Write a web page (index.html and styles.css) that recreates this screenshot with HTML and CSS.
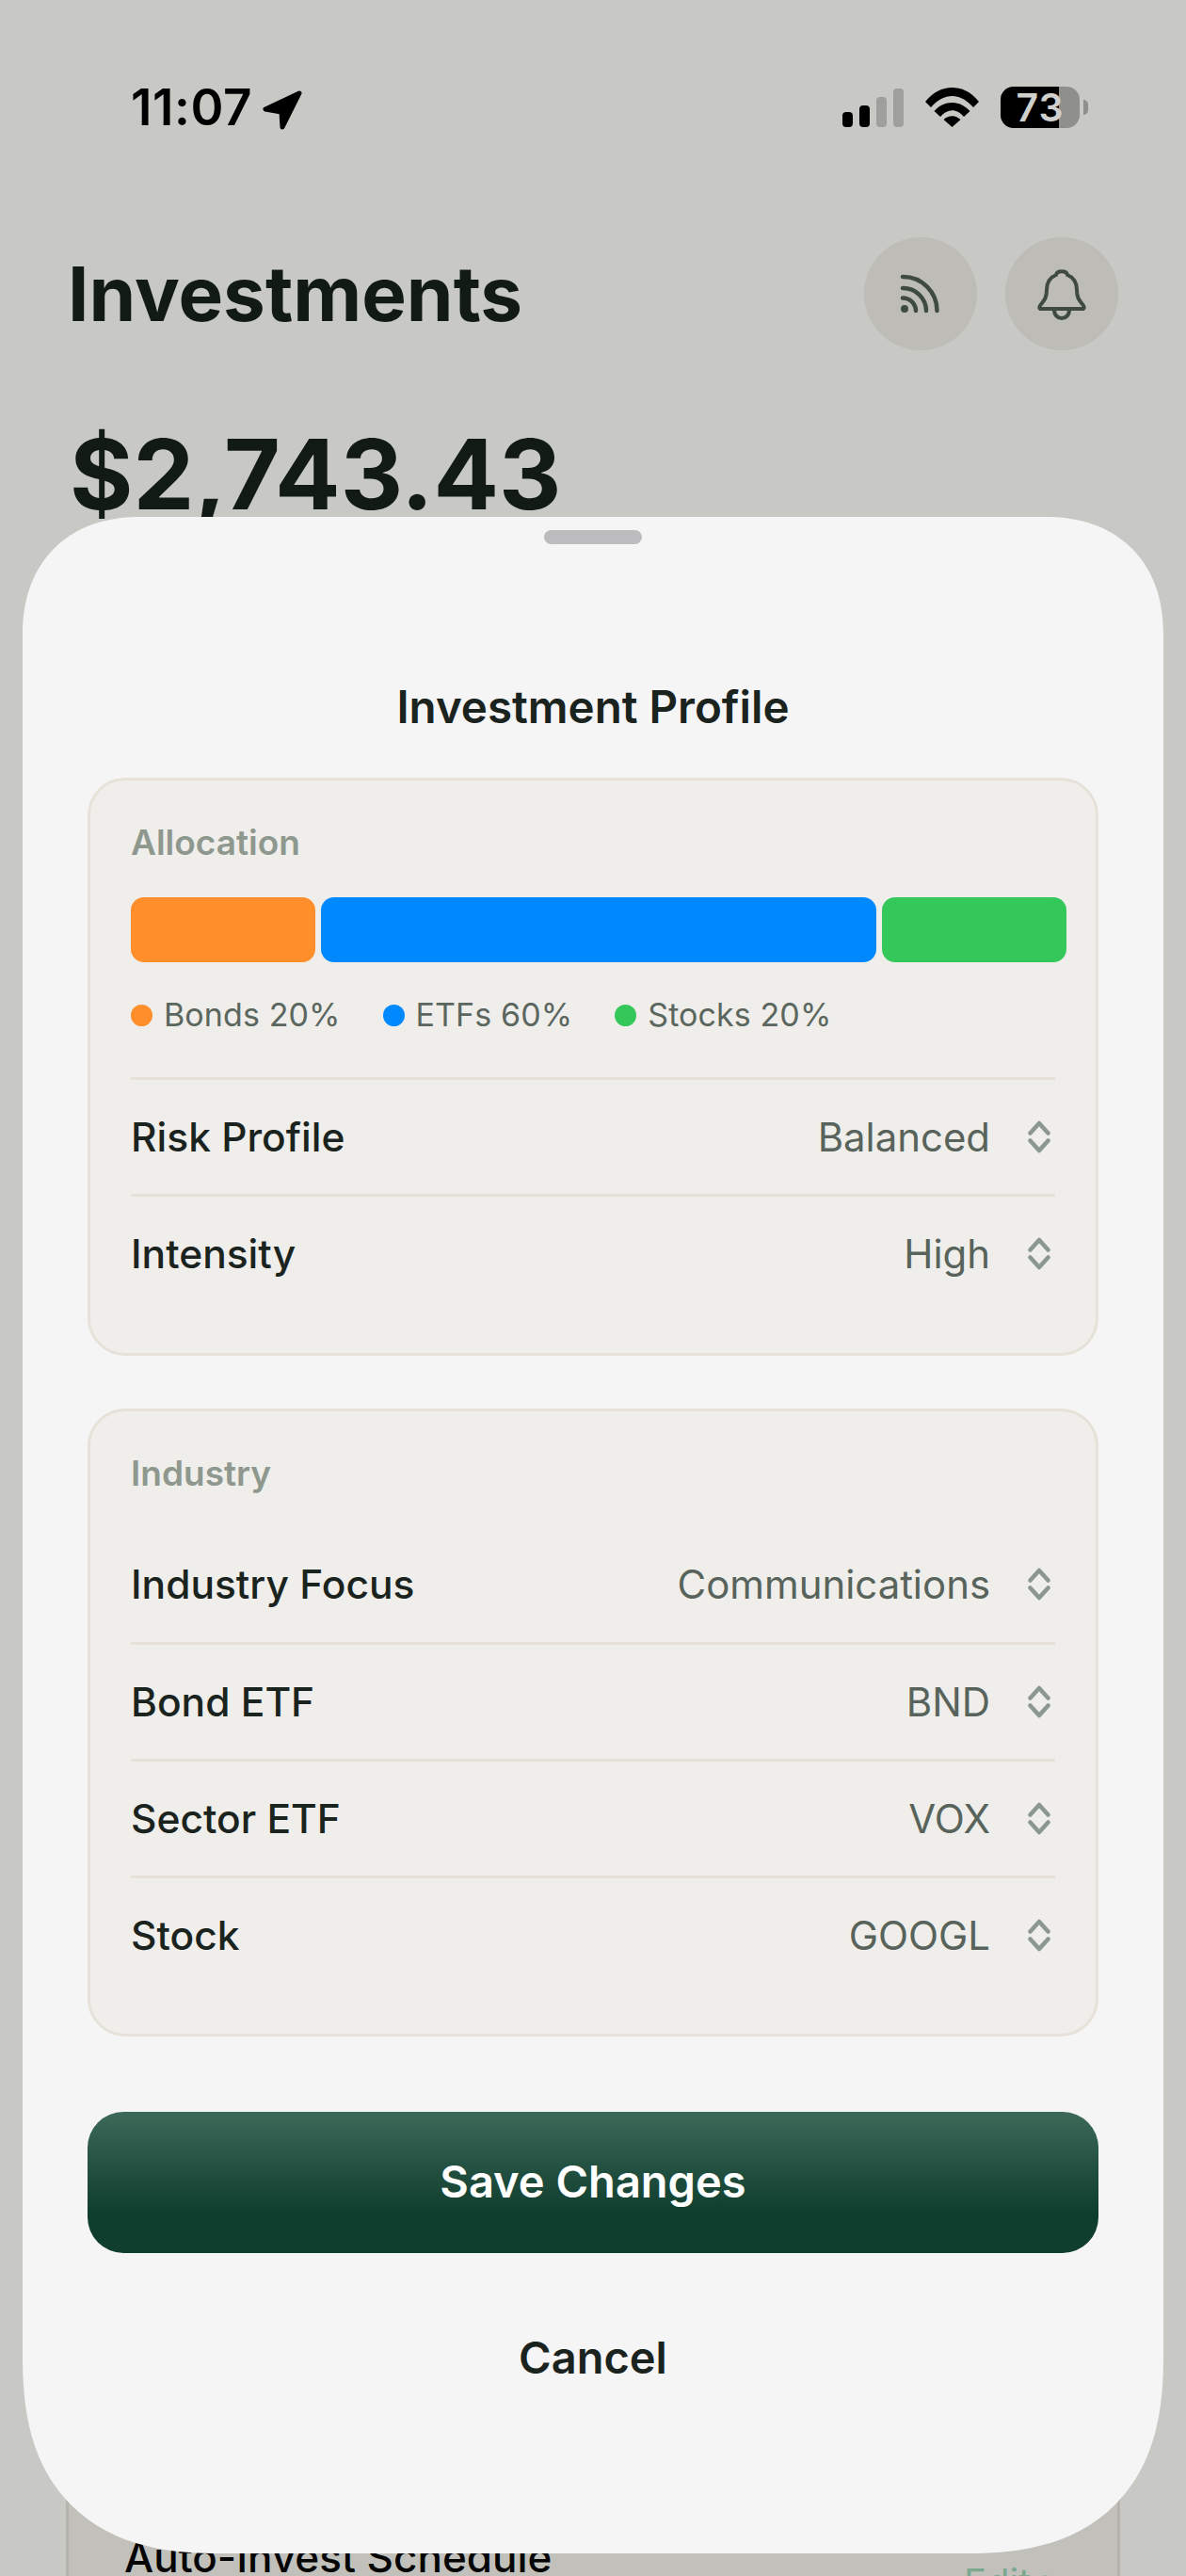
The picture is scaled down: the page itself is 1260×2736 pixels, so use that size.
FILE: index.html
```html
<!DOCTYPE html>
<html lang="en">
<head>
<meta charset="utf-8">
<title>Investment Profile</title>
<link rel="stylesheet" href="styles.css">
</head>
<body>
<div class="screen">
  <header class="status">
    <div class="status-left">
      <span class="time">11:07</span>
      <svg class="arrow" width="46" height="46" viewBox="0 0 46 46"><path d="M40 5 4 22 21 25 22 41Z" fill="#000" stroke="#000" stroke-width="5" stroke-linejoin="round"/></svg>
    </div>
    <div class="status-right">
      <div class="signal">
        <i class="bar b1"></i><i class="bar b2"></i><i class="bar b3"></i><i class="bar b4"></i>
      </div>
      <svg class="wifi" width="57" height="42" viewBox="0 0 57 42"><path d="M0 15C16-5 41-5 57 15L51 21C37 5 20 5 6 21Z"/><path d="M9.500 25C20 13 37 13 47.500 25L41 31C33 22 24 22 16 31Z"/><path d="M19.500 34C25 29 32 29 37.500 34L28.500 42Z"/></svg>
      <div class="battery"><div class="battery-body"><div class="battery-fill"></div><span class="battery-num">73</span></div><i class="battery-cap"></i></div>
    </div>
  </header>

  <div class="head">
    <h1 class="page-title">Investments</h1>
    <div class="head-actions">
      <button class="round">
        <svg width="60" height="60" viewBox="0 0 60 60" fill="none" stroke="#3f4a42" stroke-width="4.500" stroke-linecap="round"><circle cx="13" cy="46" r="4" fill="#3f4a42" stroke="none"/><path d="M11 12A36 36 0 0 1 47.500 48"/><path d="M11 24A24.500 24.500 0 0 1 36 48"/><path d="M11 34.500A14 14 0 0 1 25 48"/></svg>
      </button>
      <button class="round">
        <svg width="60" height="60" viewBox="0 0 60 60" fill="none" stroke="#3f4a42" stroke-width="4" stroke-linecap="round" stroke-linejoin="round"><path d="M8 46C6 46 6 44 7 42.500C10 38 14 36 14 26C14 16 19 12 24 10C25 5 35 5 36 10C41 12 46 16 46 26C46 36 50 38 53 42.500C54 44 54 46 52 46Z"/><path d="M22 47C22 53 26 56 30 56C34 56 38 53 38 47"/></svg>
      </button>
    </div>
  </div>

  <div class="balance">$2,743.43</div>

  <section class="behind-card">
    <span class="behind-title">Auto-Invest Schedule</span>
    <span class="behind-edit">Edit ›</span>
  </section>

  <div class="sheet">
    <div class="handle"></div>
    <h2 class="sheet-title">Investment Profile</h2>

    <section class="card">
      <div class="card-label">Allocation</div>
      <div class="alloc-bar">
        <div class="seg seg-orange"></div>
        <div class="seg seg-blue"></div>
        <div class="seg seg-green"></div>
      </div>
      <div class="legend">
        <span class="legend-item"><i class="dot seg-orange"></i>Bonds 20%</span>
        <span class="legend-item"><i class="dot seg-blue"></i>ETFs 60%</span>
        <span class="legend-item"><i class="dot seg-green"></i>Stocks 20%</span>
      </div>
      <div class="rows rows-ruled">
        <div class="row"><span class="row-name">Risk Profile</span><span class="row-value">Balanced</span><svg class="updown" width="24" height="35" viewBox="0 0 24 35"><path d="M2.500 13.500 12 3 21.500 13.500M2.500 21.500 12 32 21.500 21.500"/></svg></div>
        <div class="row"><span class="row-name">Intensity</span><span class="row-value">High</span><svg class="updown" width="24" height="35" viewBox="0 0 24 35"><path d="M2.500 13.500 12 3 21.500 13.500M2.500 21.500 12 32 21.500 21.500"/></svg></div>
      </div>
    </section>

    <section class="card card-second">
      <div class="card-label">Industry</div>
      <div class="rows">
        <div class="row"><span class="row-name">Industry Focus</span><span class="row-value">Communications</span><svg class="updown" width="24" height="35" viewBox="0 0 24 35"><path d="M2.500 13.500 12 3 21.500 13.500M2.500 21.500 12 32 21.500 21.500"/></svg></div>
        <div class="row"><span class="row-name">Bond ETF</span><span class="row-value">BND</span><svg class="updown" width="24" height="35" viewBox="0 0 24 35"><path d="M2.500 13.500 12 3 21.500 13.500M2.500 21.500 12 32 21.500 21.500"/></svg></div>
        <div class="row"><span class="row-name">Sector ETF</span><span class="row-value">VOX</span><svg class="updown" width="24" height="35" viewBox="0 0 24 35"><path d="M2.500 13.500 12 3 21.500 13.500M2.500 21.500 12 32 21.500 21.500"/></svg></div>
        <div class="row"><span class="row-name">Stock</span><span class="row-value">GOOGL</span><svg class="updown" width="24" height="35" viewBox="0 0 24 35"><path d="M2.500 13.500 12 3 21.500 13.500M2.500 21.500 12 32 21.500 21.500"/></svg></div>
      </div>
    </section>

    <button class="save">Save Changes</button>
    <button class="cancel">Cancel</button>
  </div>
</div>
</body>
</html>
```

FILE: styles.css
```css
* { box-sizing: border-box; }
html, body { margin: 0; padding: 0; }
body {
  width: 1260px;
  height: 2736px;
  overflow: hidden;
  background: #c8c9c4;
  font-family: Inter, "Liberation Sans", sans-serif;
  color: #121a15;
}
.screen { position: relative; width: 1260px; height: 2736px; overflow: hidden; }

/* status bar */
.status {
  display: flex;
  justify-content: space-between;
  align-items: flex-start;
  height: 252px;
  padding: 92px 104px 0 139px;
}
.status-left { display: flex; align-items: center; gap: 10px; height: 44px; }
.time { font-size: 53px; font-weight: 600; line-height: 44px; color: #000; letter-spacing: 0.6px; }
.arrow { margin-top: 5px; }
.status-right { display: flex; align-items: flex-start; }
.signal { display: flex; align-items: flex-end; gap: 7px; height: 43px; margin-right: 23px; }
.bar { display: block; width: 11px; border-radius: 4px; background: #000; }
.b1 { height: 16px; }
.b2 { height: 23px; }
.b3 { height: 32px; background: #9f9f9b; }
.b4 { height: 41px; background: #9f9f9b; }
.wifi { fill: #000; margin-top: 1px; margin-right: 23px; }
.battery { display: flex; align-items: center; }
.battery-body {
  position: relative;
  width: 84px;
  height: 44px;
  border-radius: 14px;
  background: #8f8f8b;
}
.battery-fill { height: 100%; width: 62px; border-radius: 14px 0 0 14px; background: #000; }
.battery-num {
  position: absolute;
  left: 0; right: 0; top: 0;
  text-align: center;
  font-size: 41px;
  letter-spacing: 1px;
  line-height: 44px;
  font-weight: 600;
  color: #d0d0cc;
}
.battery-cap { display: block; width: 5px; height: 16px; margin-left: 4px; border-radius: 0 5px 5px 0; background: #8f8f8b; }

/* page header */
.head { display: flex; justify-content: space-between; align-items: center; height: 120px; padding: 0 72px 0 72px; }
.page-title { margin: 0; font-size: 80px; font-weight: 700; line-height: 120px; }
.head-actions { display: flex; gap: 30px; }
.round {
  display: flex;
  align-items: center;
  justify-content: center;
  width: 120px;
  height: 120px;
  padding: 0;
  border: 0;
  border-radius: 50%;
  background: #bdbcb7;
}
.balance { margin: 72px 0 0 74px; font-size: 103px; line-height: 120px; font-weight: 700; }

/* content under the sheet */
.behind-card {
  display: flex;
  justify-content: space-between;
  margin: 2086px 70px 0;
  height: 400px;
  padding: 33px 65px 0 59px;
  border: 3px solid #b5b3ab;
  background: #c1c0bb;
}
.behind-title { font-size: 44px; line-height: 60px; font-weight: 500; height: 60px; color: #050505; }
.behind-edit { font-size: 40px; line-height: 48px; height: 48px; margin-top: 33px; color: #7ba88f; }

/* sheet */
.sheet {
  position: absolute;
  left: 24px;
  top: 549px;
  width: 1212px;
  height: 2163px;
  display: flex;
  flex-direction: column;
  align-items: stretch;
  padding: 14px 69px 0;
  background: #f5f5f5;
  border-radius: 125px 125px 210px 210px;
  corner-shape: superellipse(1.15) superellipse(1.15) superellipse(1.3) superellipse(1.3);
}
.handle { align-self: center; width: 104px; height: 15px; border-radius: 8px; background: #bcbcbe; }
.sheet-title { margin: 143px 0 0; height: 60px; font-size: 47.500px; line-height: 60px; font-weight: 600; text-align: center; color: #1a231e; }
.card {
  margin-top: 45px;
  padding: 41px 43px 45px;
  background: #efeeea;
  border: 3px solid #e6e2d9;
  border-radius: 40px;
}
.card-second { margin-top: 56px; padding-bottom: 44px; }
.card-label { font-size: 37px; line-height: 50px; font-weight: 600; color: #8e988f; }

.alloc-bar { display: flex; gap: 6px; height: 69px; margin: 33px -12px 0 0; }
.seg { flex: 1; border-radius: 14px; }
.seg-blue { flex: 3; }
.seg-orange { background: #ff8e2b; }
.seg-blue { background: #0088ff; }
.seg-green { background: #34c759; }

.legend { display: flex; gap: 45px; height: 40px; margin-top: 36px; }
.legend-item { display: flex; align-items: center; gap: 12px; font-size: 34px; letter-spacing: 0.1px; line-height: 40px; color: #5b665e; }
.dot { display: block; flex: none; width: 23px; height: 23px; border-radius: 50%; }

.rows { margin-top: 31px; }
.rows-ruled { margin-top: 46px; border-top: 3px solid #e6e1d8; }
.row { display: flex; align-items: center; height: 124px; padding-right: 5px; border-top: 3px solid #e6e1d8; }
.row:first-child { border-top: 0; height: 121px; }
.rows:not(.rows-ruled) .row:first-child { height: 123px; }
.row-name { flex: 1; font-size: 42.500px; font-weight: 500; color: #1a231e; }
.row-value { font-size: 41.900px; color: #57635b; margin-right: 40px; }
.updown { flex: none; fill: none; stroke: #8c978f; stroke-width: 4.500; stroke-linecap: round; stroke-linejoin: round; }

.save {
  height: 150px;
  margin-top: 80px;
  padding: 0 0 3px;
  border: 0;
  border-radius: 38px;
  background: linear-gradient(180deg, #3c6958 0%, #0f3d2e 72%);
  color: #fff;
  font: 600 47px Inter, "Liberation Sans", sans-serif;
}
.cancel {
  height: 60px;
  margin-top: 80px;
  padding: 0;
  border: 0;
  background: none;
  color: #1a231e;
  font: 600 47px Inter, "Liberation Sans", sans-serif;
}
```
